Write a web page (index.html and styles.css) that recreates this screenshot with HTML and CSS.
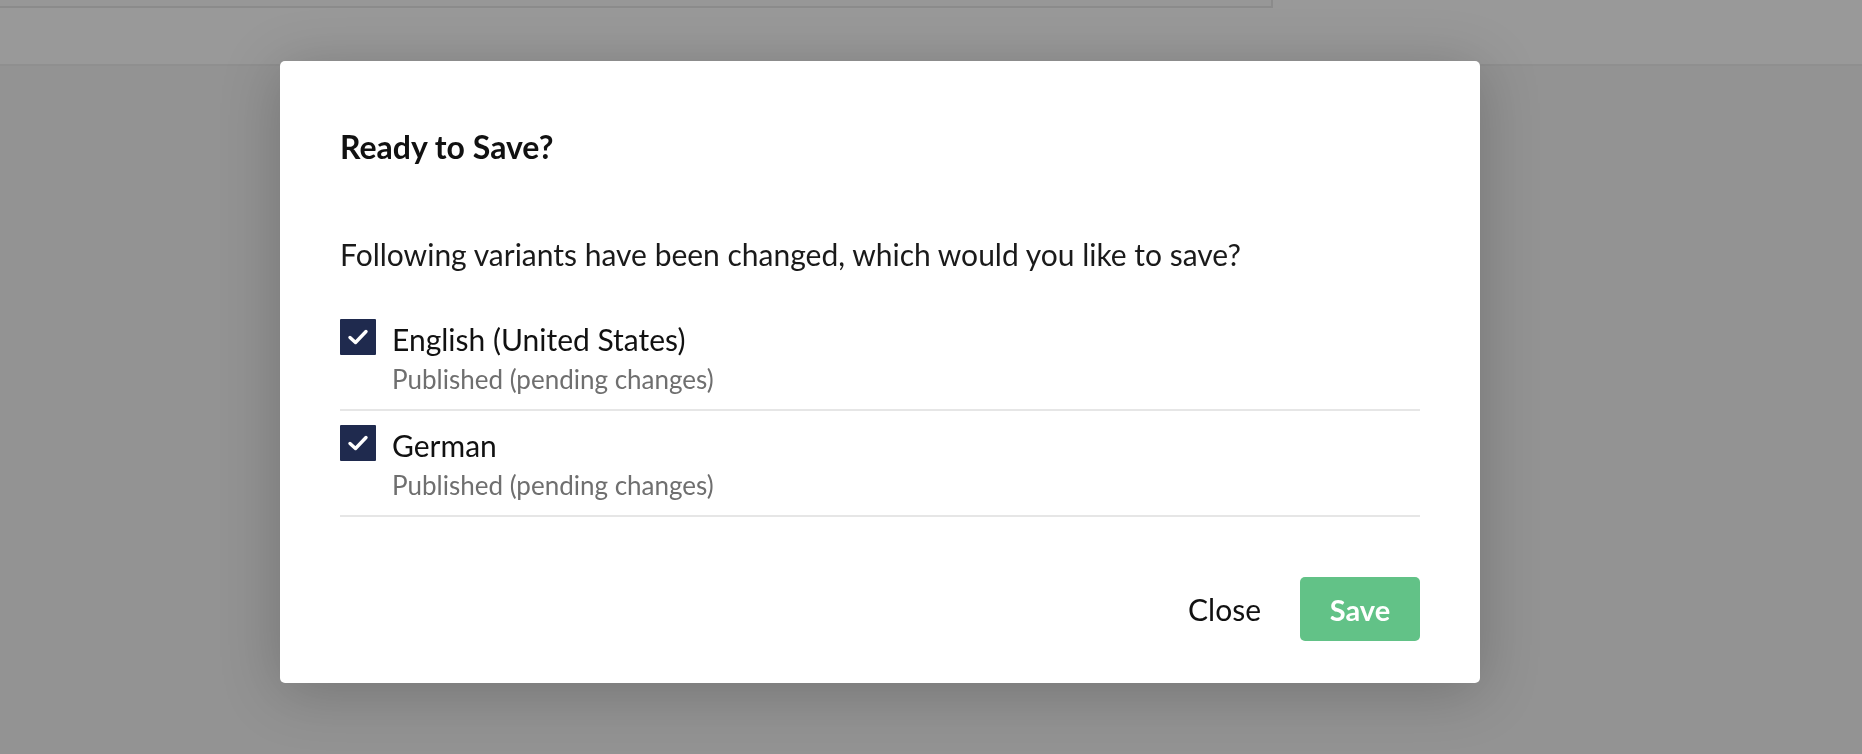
FILE: index.html
```html
<!DOCTYPE html>
<html lang="en">
  <head>
    <meta charset="UTF-8" />
    <meta name="viewport" content="width=device-width, initial-scale=1.0" />
    <title>Ready to Save?</title>
    <link rel="stylesheet" href="styles.css">
  </head>
  <body>
    <div class="page">
      <div class="topbar">
        <div class="topbox"></div>
      </div>
    </div>

    <div class="overlay">
      <div class="modal">
        <h1 class="modal-title">Ready to Save?</h1>
        <p class="modal-text">Following variants have been changed, which would you like to save?</p>

        <ul class="variants">
          <li class="variant">
            <span class="checkbox">
              <svg viewBox="0 0 36 36" width="36" height="36"><polyline points="10,18.5 15.5,23.5 26,12.5" /></svg>
            </span>
            <div class="variant-text">
              <div class="variant-name">English (United States)</div>
              <div class="variant-status">Published (pending changes)</div>
            </div>
          </li>
          <li class="variant">
            <span class="checkbox">
              <svg viewBox="0 0 36 36" width="36" height="36"><polyline points="10,18.5 15.5,23.5 26,12.5" /></svg>
            </span>
            <div class="variant-text">
              <div class="variant-name">German</div>
              <div class="variant-status">Published (pending changes)</div>
            </div>
          </li>
        </ul>

        <div class="modal-footer">
          <button class="btn btn-close">Close</button>
          <button class="btn btn-save">Save</button>
        </div>
      </div>
    </div>
  </body>
</html>
```

FILE: styles.css
```css
body {
  margin: 0;
  font-family: Lato, "Open Sans", sans-serif;
  background-color: #939393;
  height: 754px;
  overflow: hidden;
}
.topbar {
  height: 64px;
  background-color: #999;
  border-bottom: 2px solid #8f8f8f;
}
.topbox {
  width: 1271px;
  height: 6px;
  border-right: 2px solid #8b8b8b;
  border-bottom: 2px solid #8b8b8b;
  background-color: #979797;
}
.overlay {
  position: fixed;
  top: 0;
  left: 0;
  right: 0;
  bottom: 0;
  padding: 61px 0 0 280px;
}
.modal {
  width: 1200px;
  box-sizing: border-box;
  background-color: #fff;
  border-radius: 5px;
  padding: 0 60px 42px;
  box-shadow: 0 8px 60px rgba(0, 0, 0, 0.22);
}
.modal-title {
  margin: 0;
  padding-top: 67px;
  font-size: 32px;
  font-weight: 700;
  line-height: 38px;
  color: #111;
}
.modal-text {
  margin: 70px 0 0;
  font-size: 30px;
  line-height: 36px;
  color: #1a1a1a;
}
.variants {
  list-style: none;
  margin: 33px 0 0;
  padding: 0;
}
.variant {
  display: flex;
  align-items: flex-start;
  padding: 14px 0 15px;
  border-bottom: 2px solid #e6e6e6;
}
.checkbox {
  width: 36px;
  height: 36px;
  flex-shrink: 0;
  background-color: #1f2a4e;
  border-radius: 1px;
}
.checkbox svg {
  display: block;
}
.checkbox polyline {
  fill: none;
  stroke: #fff;
  stroke-width: 3.4;
  stroke-linecap: round;
  stroke-linejoin: round;
}
.variant-text {
  margin-left: 16px;
  padding-top: 3px;
}
.variant-name {
  font-size: 30px;
  line-height: 34px;
  color: #111;
}
.variant-status {
  margin-top: 8px;
  font-size: 26px;
  line-height: 30px;
  color: #6f6f6f;
}
.modal-footer {
  display: flex;
  justify-content: flex-end;
  align-items: center;
  margin-top: 60px;
}
.btn {
  font-family: Lato, "Open Sans", sans-serif;
  font-size: 30px;
  border: none;
  cursor: pointer;
}
.btn-close {
  background: none;
  color: #111;
  padding: 0 20px;
  margin-right: 19px;
}
.btn-save {
  width: 120px;
  height: 64px;
  background-color: #62c287;
  color: #fff;
  font-size: 29px;
  font-weight: 700;
  border-radius: 5px;
}
```
